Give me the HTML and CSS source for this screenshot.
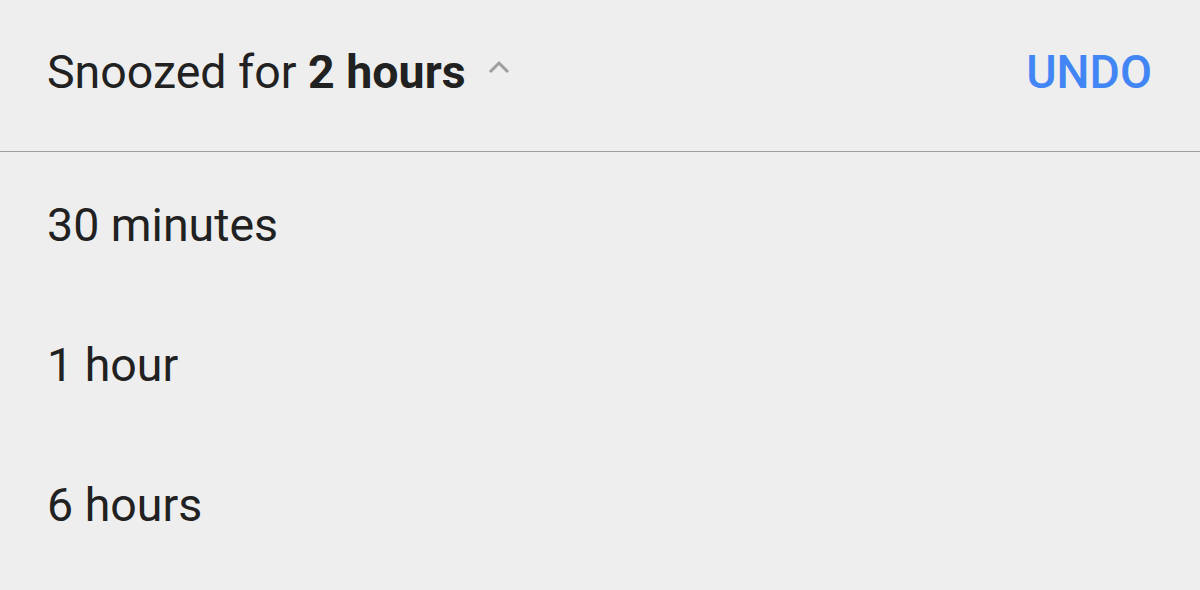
FILE: index.html
```html
<!DOCTYPE html>
<html lang="en">

<head>
    <meta charset="UTF-8">
    <meta name="viewport" content="width=device-width, initial-scale=1.0">
    <title>Snooze</title>
    <link rel="stylesheet" href="styles.css">
</head>

<body>
    <!-- snooze bar -->
    <div class="snooze-bar">
        <div class="snooze-title">
            <span>Snoozed for <b>2 hours</b></span>
            <svg class="chevron" width="24" height="16" viewBox="0 0 24 16">
                <path d="M3 13 L12 4 L21 13" fill="none" stroke="#9e9e9e" stroke-width="3"/>
            </svg>
        </div>
        <button class="undo-btn">UNDO</button>
    </div>

    <!-- snooze options -->
    <ul class="snooze-list">
        <li>30 minutes</li>
        <li>1 hour</li>
        <li>6 hours</li>
    </ul>
</body>
</html>
```

FILE: styles.css
```css
/* page */
body {
    margin: 0;
    background: #eeeeee;
    font-family: Roboto, 'Noto Sans', sans-serif;
    color: #212121;
    height: 100vh;
    overflow: hidden;
}

/* top bar */
.snooze-bar {
    display: flex;
    align-items: center;
    justify-content: space-between;
    height: 143px;
    padding: 0 48px 8px 47px;
    border-bottom: 1px solid #9e9e9e;
}

.snooze-title {
    display: flex;
    align-items: center;
    font-size: 46.5px;
}

.snooze-title b {
    font-weight: 700;
}

.chevron {
    margin-left: 21px;
    margin-top: -10px;
}

.undo-btn {
    background: none;
    border: none;
    padding: 0;
    font-family: inherit;
    font-size: 46.5px;
    font-weight: 500;
    color: #4285f4;
    cursor: pointer;
}

/* options list */
.snooze-list {
    list-style: none;
    margin: 3px 0 0 0;
    padding: 0;
}

.snooze-list li {
    height: 140px;
    line-height: 140px;
    padding: 0 47px;
    font-size: 46.5px;
}
```
